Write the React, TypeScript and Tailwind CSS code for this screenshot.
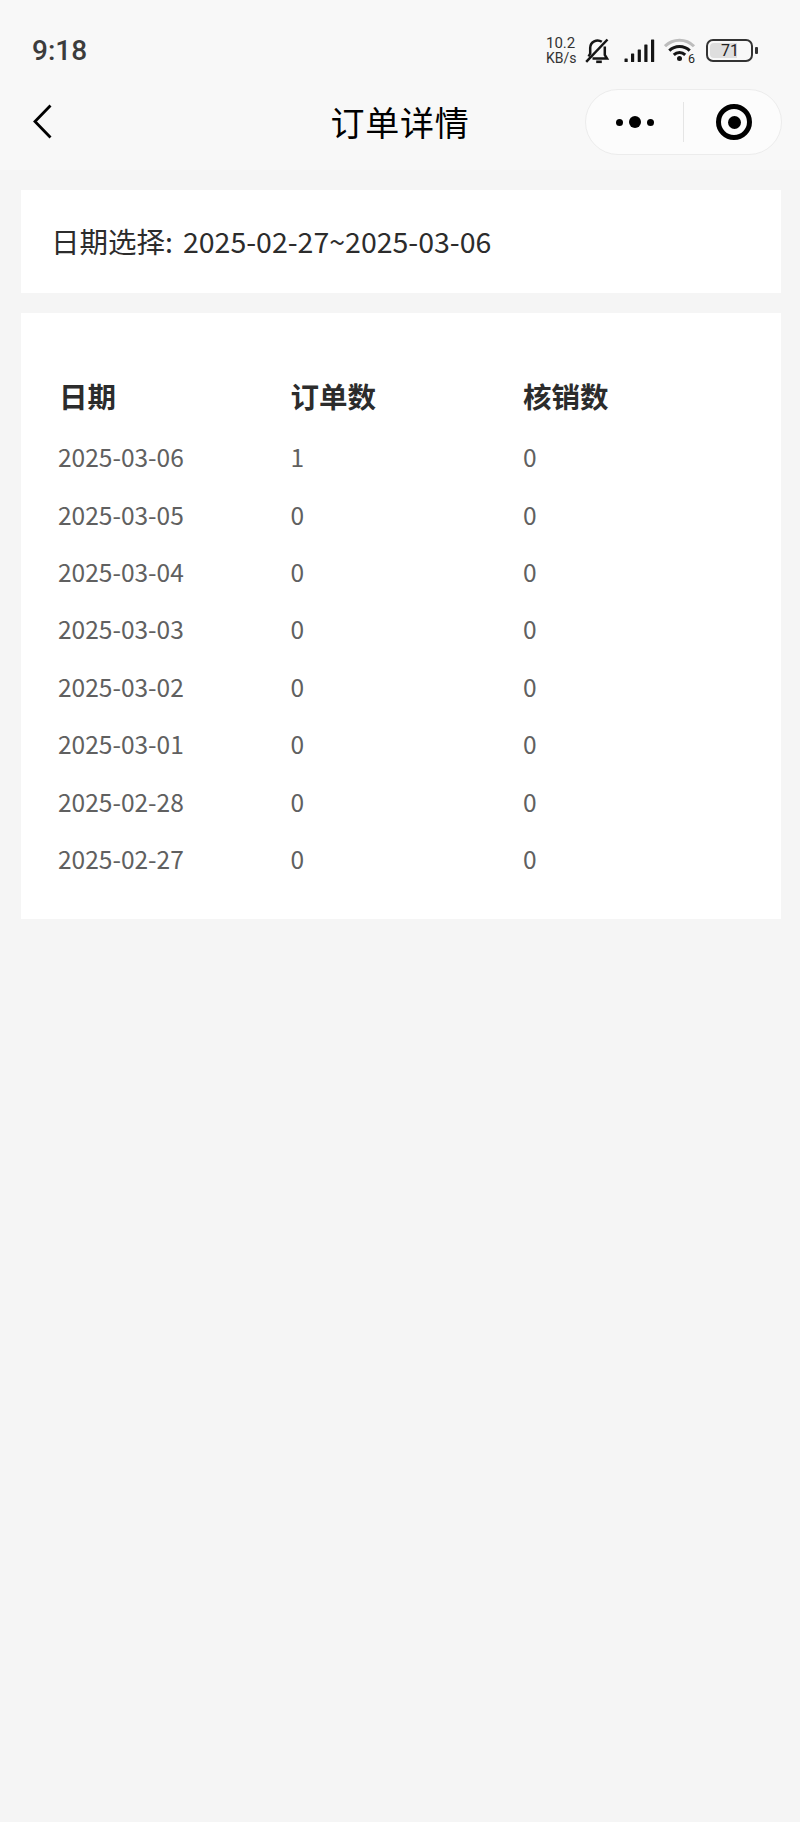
import React from 'react';

interface OrderRow {
  date: string;
  orders: number;
  verified: number;
}

const rows: OrderRow[] = [
  { date: '2025-03-06', orders: 1, verified: 0 },
  { date: '2025-03-05', orders: 0, verified: 0 },
  { date: '2025-03-04', orders: 0, verified: 0 },
  { date: '2025-03-03', orders: 0, verified: 0 },
  { date: '2025-03-02', orders: 0, verified: 0 },
  { date: '2025-03-01', orders: 0, verified: 0 },
  { date: '2025-02-28', orders: 0, verified: 0 },
  { date: '2025-02-27', orders: 0, verified: 0 },
];

const MutedBell: React.FC = () => (
  <svg className="ml-[7px] h-[28px] w-[26px]" viewBox="0 0 26 28" fill="none" stroke="#151515" strokeWidth="2.5">
    <path d="M5.2 17.5V10.8A7.4 7.4 0 0 1 16.8 4.8M19.8 9.5V18L22 21.6H7.5M5.2 16.5L3.6 19.5" />
    <path d="M1.2 24.8L22.5 2.5" />
    <path d="M11.2 24.8H16.8" strokeWidth="2.6" />
  </svg>
);

const Signal: React.FC = () => (
  <svg className="ml-[13px] h-[24px] w-[32px]" viewBox="0 0 32 24" fill="#151515">
    <rect x="0.5" y="19.5" width="3.2" height="3.5" rx="0.6" />
    <rect x="7" y="14.5" width="3.2" height="8.5" rx="0.6" />
    <rect x="13.7" y="10.5" width="3.2" height="12.5" rx="0.6" />
    <rect x="20.3" y="5.5" width="3.2" height="17.5" rx="0.6" />
    <rect x="27" y="0.5" width="3.2" height="22.5" rx="0.6" />
  </svg>
);

const Wifi: React.FC = () => (
  <svg className="ml-[8px] h-[31px] w-[34px]" viewBox="0 -2 34 31" fill="none" strokeWidth="3">
    <path d="M1 9.2A20.5 20.5 0 0 1 30 9.2" stroke="#bdbdbd" />
    <path d="M5.3 13.6A14.5 14.5 0 0 1 25.7 13.6" stroke="#151515" />
    <path d="M9.8 17.8A8.3 8.3 0 0 1 21.2 17.8" stroke="#151515" />
    <circle cx="15.5" cy="21.5" r="2.5" fill="#151515" />
    <text x="24" y="26" fill="#222" fontSize="12.5" fontFamily="Roboto, sans-serif">6</text>
  </svg>
);

const Battery: React.FC = () => (
  <div className="ml-[8px] flex items-center gap-[2px]">
    <div className="flex h-[23px] w-[47px] rounded-[7px] border-2 border-[#333] p-[2px]">
      <div className="flex w-full items-center justify-center rounded-[4px] bg-[linear-gradient(to_right,#dedede_70%,transparent_70%)] pl-px text-[16px] leading-none text-[#222]">
        71
      </div>
    </div>
    <div className="h-[7px] w-[3px] rounded-[1px] bg-[#333]" />
  </div>
);

const StatusBar: React.FC = () => (
  <div className="flex h-[82px] items-start pl-8 pr-[42px] pt-[35px] font-['Roboto',sans-serif]">
    <div className="text-[28px] font-medium leading-[32px] text-[#3c3c3c]">9:18</div>
    <div className="ml-auto flex h-[31px] items-center">
      <div className="flex w-[32px] flex-col whitespace-nowrap text-[15px] leading-[15px] text-[#333]">
        <span>10.2</span>
        <span className="text-[14px] leading-[14px]">KB/s</span>
      </div>
      <MutedBell />
      <Signal />
      <Wifi />
      <Battery />
    </div>
  </div>
);

const NavBar: React.FC = () => (
  <div className="grid h-[88px] grid-cols-[1fr_auto_1fr] items-start px-[18px] pt-[7px]">
    <svg className="ml-[14px] mt-[15px] h-[36px] w-[22px]" viewBox="0 0 22 36" fill="none" stroke="#000" strokeWidth="2.8">
      <path d="M18.5 1.5L3 17.5L18.5 33.5" />
    </svg>
    <h1 className="text-[34px] leading-[66px] tracking-[0.8px] text-black">订单详情</h1>
    <div className="flex h-[66px] w-[197px] items-center justify-self-end rounded-full border border-[#ececec] bg-[#fcfcfc]">
      <div className="flex w-[97px] items-center justify-center gap-[6px]">
        <span className="size-[7px] rounded-full bg-black" />
        <span className="size-[12px] rounded-full bg-black" />
        <span className="size-[7px] rounded-full bg-black" />
      </div>
      <div className="h-[40px] w-px bg-[#e5e5e5]" />
      <div className="flex flex-1 items-center justify-center pl-[3px]">
        <div className="flex size-[36px] items-center justify-center rounded-full border-5 border-black">
          <span className="size-[13px] rounded-full bg-black" />
        </div>
      </div>
    </div>
  </div>
);

export default function App() {
  return (
    <div className="min-h-[1822px] w-[800px] bg-[#f5f5f5] font-['Noto_Sans_CJK_SC',sans-serif]">
      <header className="bg-[#f8f8f8]">
        <StatusBar />
        <NavBar />
      </header>

      <main className="flex flex-col gap-5 pl-[21px] pr-[19px] pt-5">
        <section className="flex h-[103px] items-center bg-white pl-[30px] text-[28.5px] text-[#2c2c2c]">
          <span>日期选择:</span>
          <span className="ml-[10px]">2025-02-27~2025-03-06</span>
        </section>

        <section className="h-[605.5px] bg-white px-[37px] pt-[51px]">
          <div className="grid h-[65px] grid-cols-[232.5px_232.5px_1fr] items-center text-[28.5px] font-bold text-[#2c2c2c]">
            <div className="pl-px">日期</div>
            <div>订单数</div>
            <div>核销数</div>
          </div>
          {rows.map((row) => (
            <div
              key={row.date}
              className="grid h-[57.4px] grid-cols-[232.5px_232.5px_1fr] items-center text-[24.5px] text-[#606060]"
            >
              <div>{row.date}</div>
              <div>{row.orders}</div>
              <div>{row.verified}</div>
            </div>
          ))}
        </section>
      </main>
    </div>
  );
}
